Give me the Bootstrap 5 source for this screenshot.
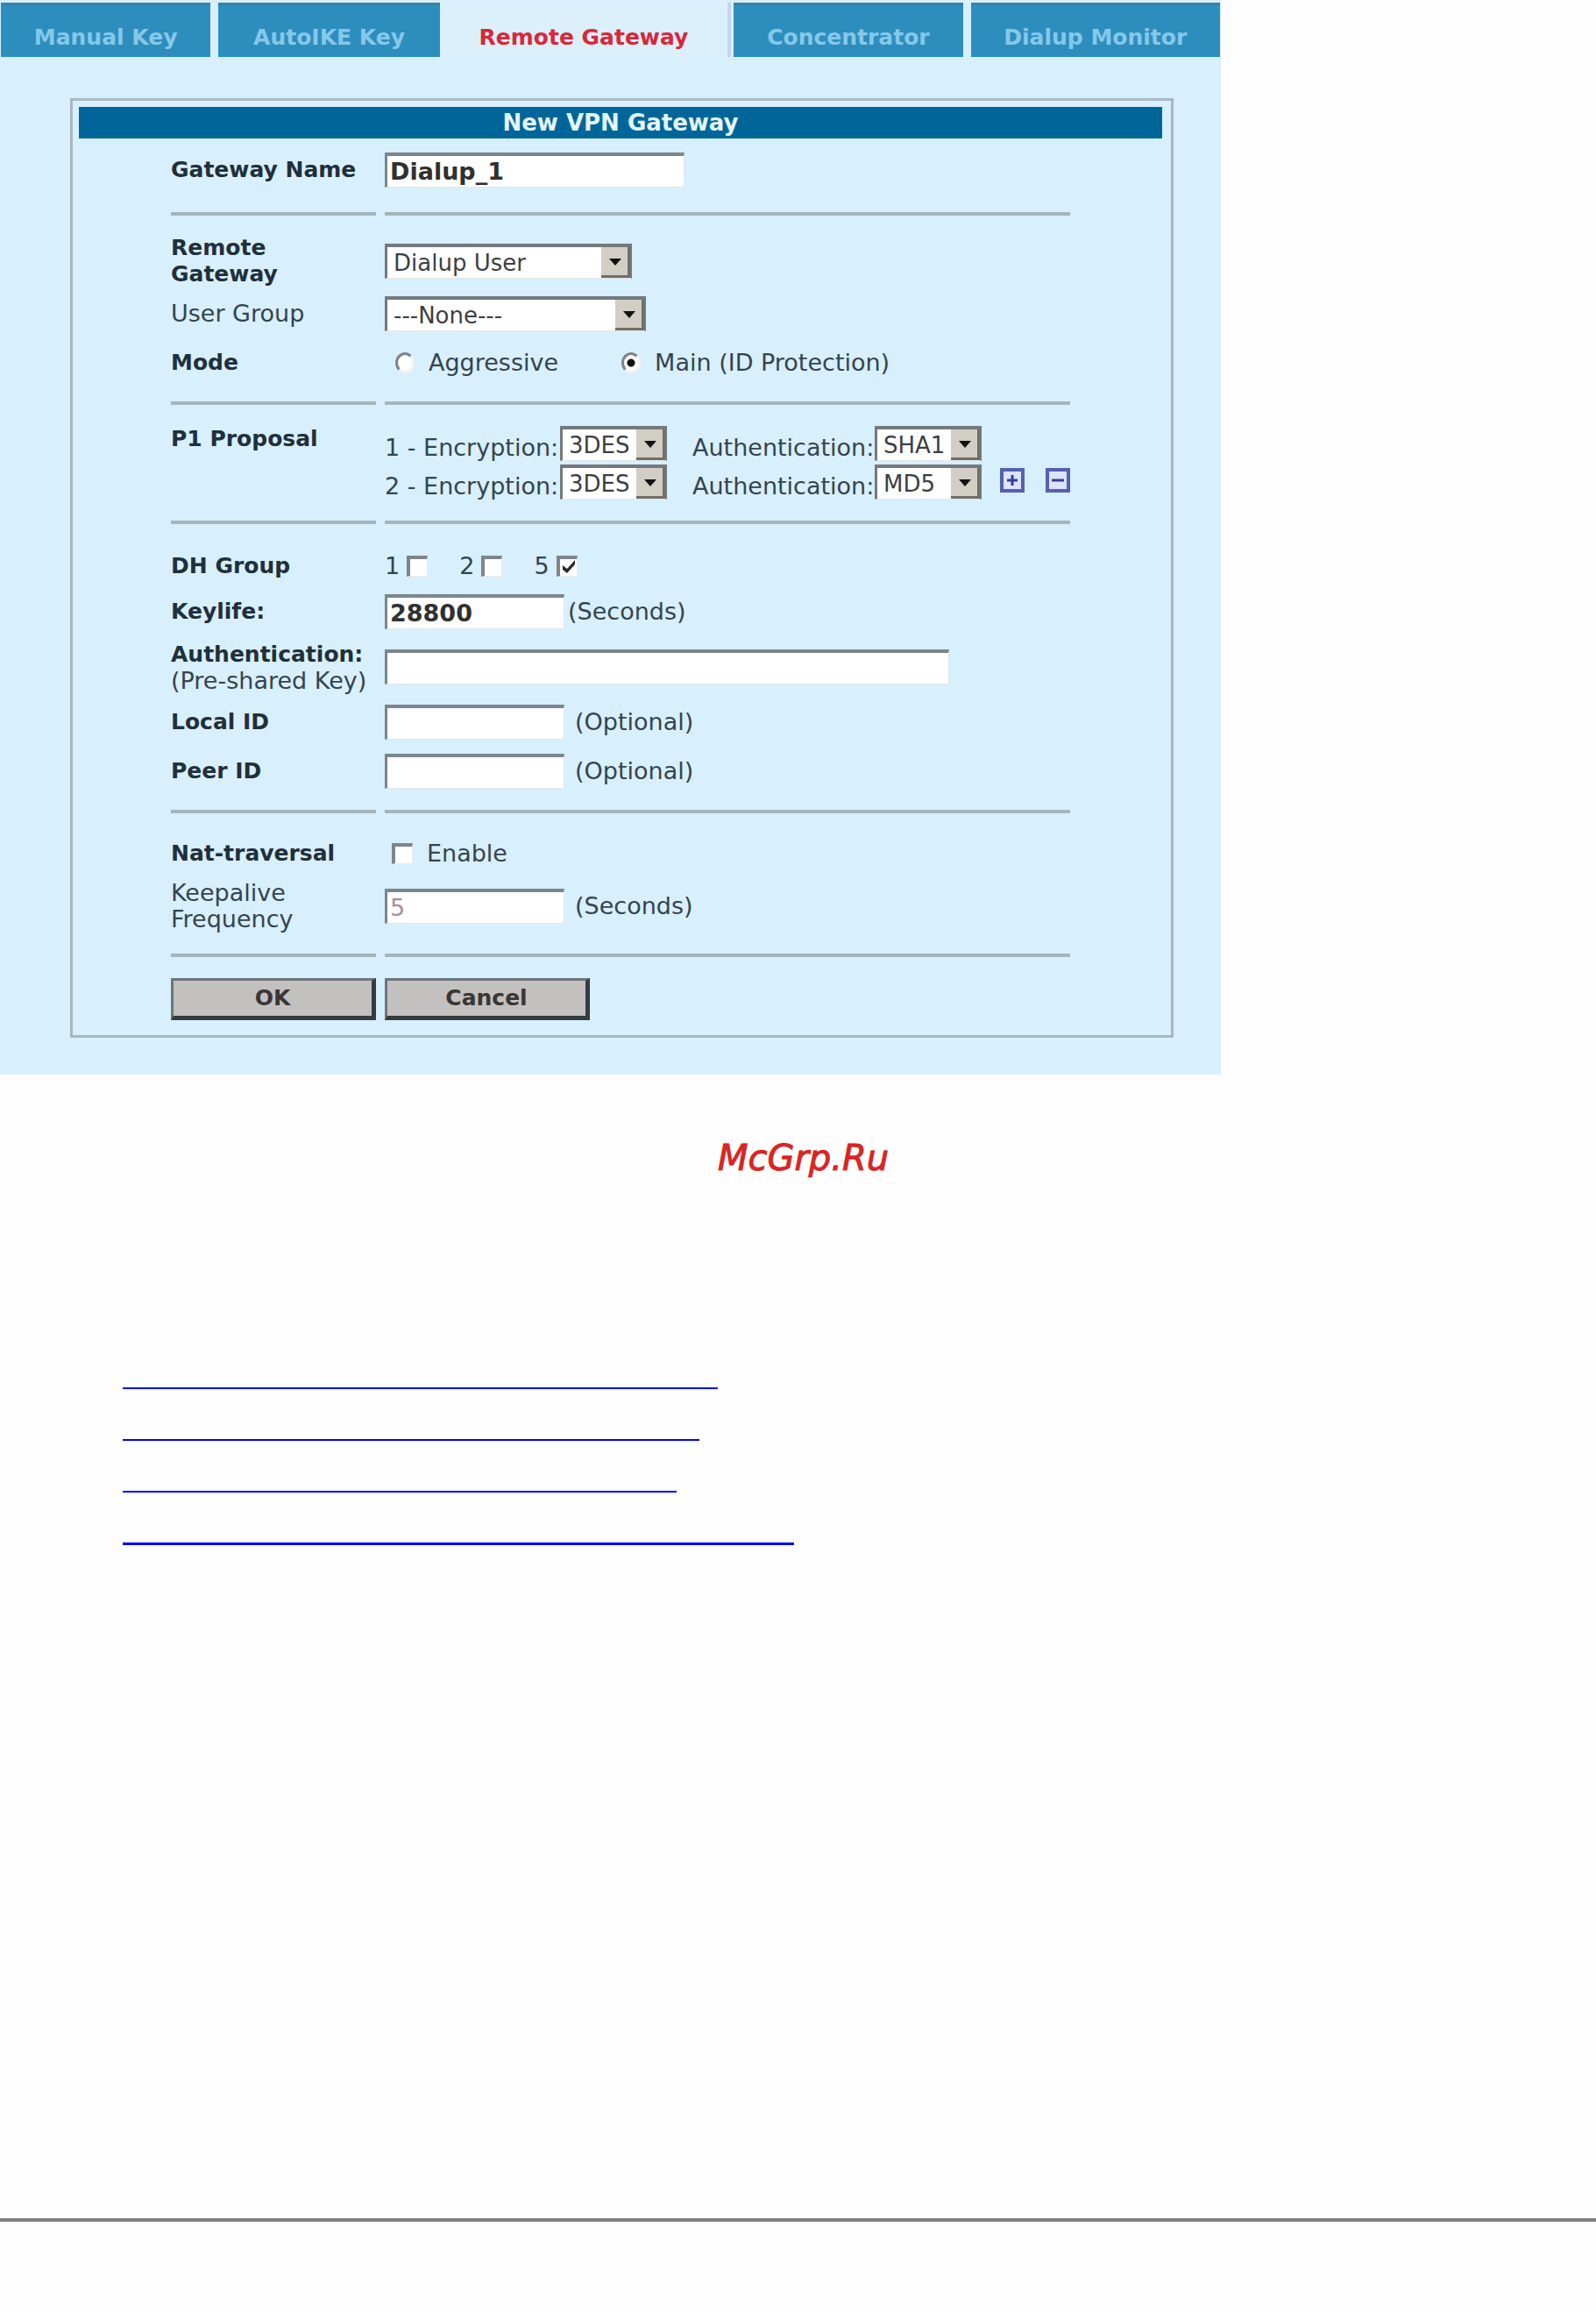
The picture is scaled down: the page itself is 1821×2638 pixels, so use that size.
<!DOCTYPE html>
<html lang="en">
<head>
<meta charset="utf-8">
<meta name="viewport" content="width=device-width, initial-scale=1">
<title>New VPN Gateway</title>
<link href="https://cdn.jsdelivr.net/npm/bootstrap@5.3.0/dist/css/bootstrap.min.css" rel="stylesheet">
<style>
  body { background: #fefefe; color: #34444f; font-family: "DejaVu Sans", Verdana, sans-serif; font-size: 27px; line-height: 30px; }
  .console { max-width: 1393px; background: #d8effd; padding-top: 3px; padding-bottom: 42px; }

  .tabs { gap: 9px; padding: 0 1px; }
  .tabs .nav-item { flex: 252 1 0; }
  .tabs .first-tab { flex-grow: 239; }
  .tabs .open-tab { flex-grow: 328; margin: 0 -6px 0 -9px; border-right: 4px solid #c3d3f0; }
  .tabs .fourth-tab { flex-grow: 261; }
  .tabs .last-tab { flex-grow: 284; }
  .tabs .nav-link { background: #2d8ebe; color: #86c8e8; border-radius: 0; border-top: 3px solid #3583ab; font-size: 25px; font-weight: 700; line-height: 30px; padding: 22px 0 7px; text-align: center; white-space: nowrap; }
  .tabs .nav-link.active { background: #dcf0fc; color: #d8283a; border-color: #dcf0fc; }

  .frame { margin: 47px 54px 0 80px; border: 3px solid #a9b7c1; padding: 7px 10px 17px 7px; }
  .frame-title { background: #006699; color: #e4f5ff; font-size: 26px; font-weight: 700; line-height: 36px; margin: 0; }
  .fields { margin: 0 105px; }
  .field { display: grid; grid-template-columns: 234px 1fr; column-gap: 10px; align-items: center; min-height: 44px; }
  .field-small { min-height: 48px; }
  .field-mid { min-height: 56px; }
  .field-tall { min-height: 68px; }
  .field-key { min-height: 70px; }
  .field-keep { min-height: 76px; }
  .field > :first-child { white-space: nowrap; }
  .strong { font-weight: 700; font-size: 25px; color: #1f303b; }
  .rule { display: grid; grid-template-columns: 234px 1fr; column-gap: 10px; }
  .rule span { height: 4px; background: #a5b5bc; }

  .box { height: 40px; border-radius: 0; border: solid; border-width: 4px 1px 1px 3px; border-color: #7b868d #e3e6e6 #e3e6e6 #7b868d; background-color: #fff; padding: 0 3px; color: #30302f; font-size: 27px; line-height: 30px; }
  .box:disabled { background: #fff; color: #a98f90; opacity: 1; }
  .w-name { width: 342px; }
  .w-short { width: 205px; }
  .w-key { width: 644px; }
  .unit { gap: 12px; }
  .pick { appearance: none; height: 40px; border: solid; border-width: 4px 2px 1px 3px; border-color: #74797d #74797d #e3e6e6 #74797d; border-radius: 0; padding: 0 0 0 7px; color: #3c3f42; font-size: 26px; line-height: 30px; background: #fff url("data:image/svg+xml,%3Csvg xmlns='http://www.w3.org/2000/svg' width='33' height='35'%3E%3Crect width='33' height='35' fill='%23d2cec6'/%3E%3Cpath d='M0 33.500H31.500V0' fill='none' stroke='%23706e69' stroke-width='3'/%3E%3Cpath d='M9 13H23L16 21Z' fill='%23111'/%3E%3C/svg%3E") right top no-repeat; }
  .w-remote { width: 282px; }
  .w-group { width: 298px; }
  .w-algo { width: 122px; }

  .tick { appearance: none; width: 24px; height: 24px; margin: 0; flex: none; background: #fff; border: solid; border-width: 4px 1px 1px 4px; border-color: #7d848a #eceae4 #eceae4 #7d848a; }
  .tick:checked { background: #fff url("data:image/svg+xml,%3Csvg xmlns='http://www.w3.org/2000/svg' viewBox='0 0 19 19'%3E%3Cpath d='M3 7V12L8 16L17 6V1L8 11Z' fill='%23302a26'/%3E%3C/svg%3E") center / 100% no-repeat; }
  .dot { appearance: none; width: 22px; height: 24px; margin: 0; flex: none; border-radius: 50%; background: #fff; border: solid 3px; border-color: #7d848a #f4f2ee #f4f2ee #7d848a; }
  .dot:checked { background: radial-gradient(circle, #111 4px, #fff 5px); }
  .modes { padding-left: 12px; gap: 72px; }
  .groups { gap: 36px; }
  .line { height: 40px; }
  .enc { width: 200px; white-space: nowrap; }
  .auth { width: 208px; margin-left: 29px; white-space: nowrap; }
  .icon-btn { border: 0; padding: 0; background: none; height: 28px; display: flex; margin-bottom: 8px; }
  .push { width: 234px; height: 48px; border-radius: 0; border: solid; border-width: 3px 5px 5px 3px; border-color: #6d7679 #343c3e #343c3e #6d7679; background: #c3c1c0; color: #3a3634; font-size: 25px; font-weight: 700; line-height: 30px; padding: 0; }

  .site-mark { font-size: 40px; line-height: 48px; font-style: oblique; color: #d92525; -webkit-text-stroke: 1px #d92525; margin: 71px 0 181px; padding-left: 12px; }
  .toc { padding-left: 140px; margin-bottom: 768px; }
  .toc a { display: block; height: 59px; border-bottom: 2px solid #0000ff; }
  .toc li:nth-child(1) a { width: 679px; }
  .toc li:nth-child(2) a { width: 658px; }
  .toc li:nth-child(3) a { width: 632px; }
  .toc li:nth-child(4) a { width: 766px; height: 60px; border-bottom-width: 3px; }
  .page-foot { border-top: 4px solid #808080; height: 107px; }
</style>
</head>
<body>
<main class="console">
  <ul class="nav nav-pills flex-nowrap tabs">
    <li class="nav-item first-tab"><a class="nav-link" href="#">Manual Key</a></li>
    <li class="nav-item"><a class="nav-link" href="#">AutoIKE Key</a></li>
    <li class="nav-item open-tab"><a class="nav-link active" href="#">Remote Gateway</a></li>
    <li class="nav-item fourth-tab"><a class="nav-link" href="#">Concentrator</a></li>
    <li class="nav-item last-tab"><a class="nav-link" href="#">Dialup Monitor</a></li>
  </ul>

  <form class="frame">
    <h1 class="frame-title text-center">New VPN Gateway</h1>
    <div class="fields">
      <div class="field field-tall pt-1 mb-3">
        <label class="strong" for="gw">Gateway Name</label>
        <div><input class="form-control box fw-bold w-name" id="gw" type="text" value="Dialup_1"></div>
      </div>
      <div class="rule"><span></span><span></span></div>

      <div class="field field-tall mt-3 pt-1">
        <label class="strong" for="remote">Remote<br>Gateway</label>
        <div class="d-flex"><select class="pick w-remote" id="remote"><option>Dialup User</option></select></div>
      </div>
      <div class="field field-mid">
        <label for="group">User Group</label>
        <div class="d-flex"><select class="pick w-group" id="group"><option>---None---</option></select></div>
      </div>
      <div class="field field-mid mb-3">
        <span class="strong">Mode</span>
        <div class="d-flex align-items-center modes">
          <div class="d-flex align-items-center gap-3"><input class="dot" type="radio" name="mode" id="m1"><label for="m1">Aggressive</label></div>
          <div class="d-flex align-items-center gap-3"><input class="dot" type="radio" name="mode" id="m2" checked><label for="m2">Main (ID Protection)</label></div>
        </div>
      </div>
      <div class="rule"><span></span><span></span></div>

      <div class="field align-items-start my-4">
        <span class="strong">P1 Proposal</span>
        <div class="d-flex flex-column gap-1">
          <div class="d-flex align-items-end line">
            <label class="enc" for="e1">1 - Encryption:</label><select class="pick w-algo" id="e1"><option>3DES</option></select>
            <label class="auth" for="a1">Authentication:</label><select class="pick w-algo" id="a1"><option>SHA1</option></select>
          </div>
          <div class="d-flex align-items-end line">
            <label class="enc" for="e2">2 - Encryption:</label><select class="pick w-algo" id="e2"><option>3DES</option></select>
            <label class="auth" for="a2">Authentication:</label><select class="pick w-algo" id="a2"><option>MD5</option></select>
            <div class="d-flex gap-4 ms-auto">
              <button class="icon-btn" type="button"><svg width="28" height="28" viewBox="0 0 28 28"><rect x="2" y="2" width="24" height="24" fill="#dce2ff" stroke="#5560b0" stroke-width="4"/><path d="M8 14H20M14 8V20" stroke="#343f9c" stroke-width="3"/></svg></button>
              <button class="icon-btn" type="button"><svg width="28" height="28" viewBox="0 0 28 28"><rect x="2" y="2" width="24" height="24" fill="#dce2ff" stroke="#5560b0" stroke-width="4"/><path d="M7 14H21" stroke="#343f9c" stroke-width="3"/></svg></button>
            </div>
          </div>
        </div>
      </div>
      <div class="rule"><span></span><span></span></div>

      <div class="field field-small mt-4">
        <span class="strong">DH Group</span>
        <div class="d-flex align-items-center groups">
          <div class="d-flex align-items-center gap-2"><label for="d1">1</label><input class="tick" type="checkbox" id="d1"></div>
          <div class="d-flex align-items-center gap-2"><label for="d2">2</label><input class="tick" type="checkbox" id="d2"></div>
          <div class="d-flex align-items-center gap-2"><label for="d5">5</label><input class="tick" type="checkbox" id="d5" checked></div>
        </div>
      </div>
      <div class="field field-mid">
        <label class="strong" for="life">Keylife:</label>
        <div class="d-flex align-items-center gap-1"><input class="form-control box fw-bold w-short" id="life" type="text" value="28800"><span>(Seconds)</span></div>
      </div>
      <div class="field field-key">
        <label for="psk"><span class="strong">Authentication:</span><br>(Pre-shared Key)</label>
        <div><input class="form-control box w-key" id="psk" type="text"></div>
      </div>
      <div class="field field-mid">
        <label class="strong" for="lid">Local ID</label>
        <div class="d-flex align-items-center unit"><input class="form-control box w-short" id="lid" type="text"><span>(Optional)</span></div>
      </div>
      <div class="field field-mid mb-3">
        <label class="strong" for="pid">Peer ID</label>
        <div class="d-flex align-items-center unit"><input class="form-control box w-short" id="pid" type="text"><span>(Optional)</span></div>
      </div>
      <div class="rule"><span></span><span></span></div>

      <div class="field mt-4">
        <span class="strong">Nat-traversal</span>
        <div class="d-flex align-items-center gap-3 ps-2"><input class="tick" type="checkbox" id="nat"><label for="nat">Enable</label></div>
      </div>
      <div class="field field-keep mb-3">
        <label for="keep">Keepalive<br>Frequency</label>
        <div class="d-flex align-items-center unit"><input class="form-control box w-short" id="keep" type="text" value="5" disabled><span>(Seconds)</span></div>
      </div>
      <div class="rule"><span></span><span></span></div>

      <div class="d-flex mt-4" style="gap:10px">
        <button class="btn push" type="button">OK</button>
        <button class="btn push" type="button">Cancel</button>
      </div>
    </div>
  </form>
</main>

<p class="site-mark text-center">McGrp.Ru</p>
<ul class="toc list-unstyled">
  <li><a href="#"></a></li>
  <li><a href="#"></a></li>
  <li><a href="#"></a></li>
  <li><a href="#"></a></li>
</ul>
<footer class="page-foot"></footer>
<script src="https://cdn.jsdelivr.net/npm/bootstrap@5.3.0/dist/js/bootstrap.bundle.min.js"></script>
</body>
</html>
